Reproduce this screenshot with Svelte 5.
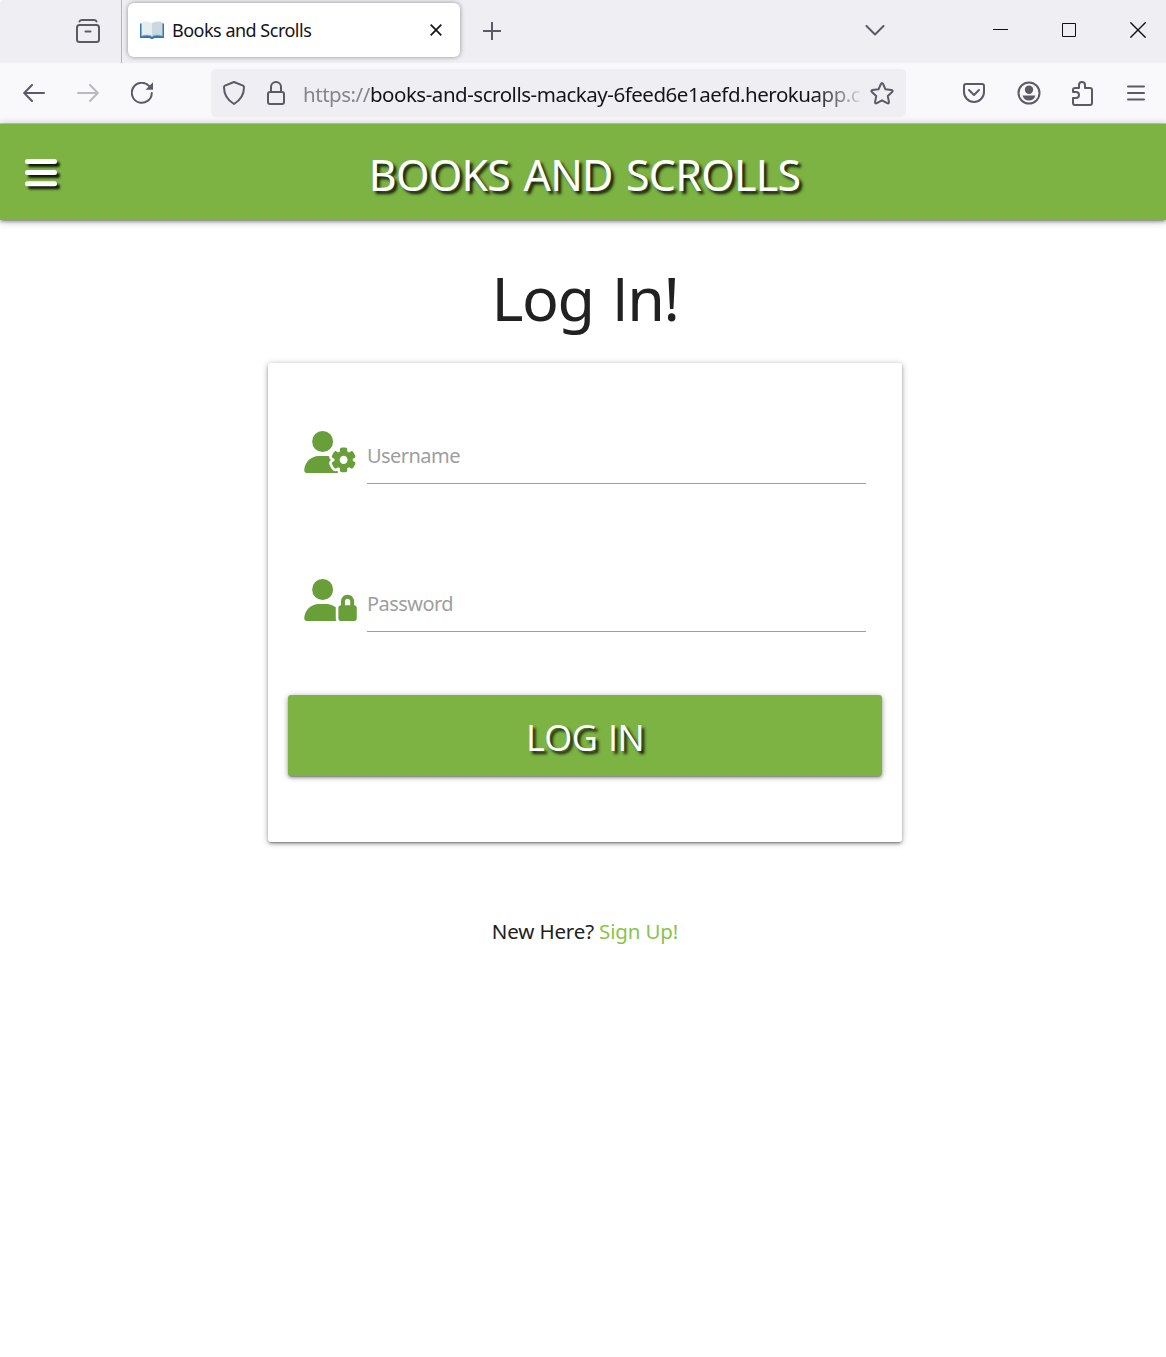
<script>
  let username = $state('');
  let password = $state('');
</script>

<div class="window">
  <div class="tabs">
    <div class="recent">
      <svg width="24" height="24" viewBox="0 0 24 24" class="line"><path d="M3.500 2.500Q4 1 6 1h12q2 0 2.500 1.500"/><rect x="1" y="6" width="22" height="17" rx="2.500"/><path d="M9.500 12.500h5"/></svg>
    </div>
    <div class="tab">
      <svg width="24" height="18" viewBox="0 0 24 18">
        <path d="M0 2.500h24v14.500h-9.500q-2.500 2-5 0H0z" fill="#2f78ad"/>
        <path d="M1.500 1Q8-.5 12 2v13.500Q8 13 1.500 15z" fill="#e6edf1"/>
        <path d="M22.500 1Q16-.5 12 2v13.500q4-2.500 10.500-.5z" fill="#cbd8df"/>
        <path d="M1.500 15Q8 13 12 15.500 16 13 22.500 15" fill="none" stroke="#9db3c1"/>
      </svg>
      <span class="tab-title">Books and Scrolls</span>
      <svg class="close" width="12" height="12" viewBox="0 0 12 12"><path d="M.7.7l10.600 10.600M11.300.7L.7 11.300"/></svg>
    </div>
    <svg class="plus" width="18" height="18" viewBox="0 0 18 18"><path d="M9 0v18M0 9h18"/></svg>
    <div class="controls">
      <svg class="line" width="20" height="11" viewBox="0 0 20 11"><path d="M1.500 1l8.500 8.500L18.500 1"/></svg>
      <svg class="thin minimize" width="15" height="15" viewBox="0 0 15 15"><path d="M0 6.500h15"/></svg>
      <svg class="thin maximize" width="14" height="14" viewBox="0 0 14 14"><path d="M.5.5h13v13H.5z"/></svg>
      <svg class="thin exit" width="16" height="16" viewBox="0 0 16 16"><path d="M.4.4l15.200 15.200M15.600.4L.4 15.600"/></svg>
    </div>
  </div>

  <div class="toolbar">
    <div class="history">
      <svg class="line" width="22" height="18" viewBox="0 0 22 18"><path d="M21 9H1.500M9 1L1.200 9 9 17"/></svg>
      <svg class="line faded" width="22" height="18" viewBox="0 0 22 18"><path d="M1 9h19.500M13 1l7.800 8L13 17"/></svg>
      <svg class="line reload" width="23" height="22" viewBox="0 0 23 22"><path d="M18.300 4.200A10 10 0 1 0 20.800 11"/><path d="M22 .3v7.500h-7.500z" fill="#5b5b66" stroke="none"/></svg>
    </div>
    <div class="address">
      <svg class="line" width="22" height="24" viewBox="0 0 22 24"><path d="M11 1L20 4.700q1 .5 1 1.500Q21 17 11 23 1 17 1 6.200q0-1 1-1.500z"/></svg>
      <svg class="line lock" width="18" height="24" viewBox="0 0 18 24"><rect x="1" y="11" width="16" height="12" rx="2"/><path d="M4 11V6a5 5 0 0 1 10 0v5"/></svg>
      <div class="url"><span>https://</span>books-and-scrolls-mackay-6feed6e1aefd.herokuapp.c</div>
      <svg class="line star" width="24" height="23" viewBox="0 0 24 23"><path d="M10.900 2q1.100-2 2.200 0l2.400 5.300 5.900.8q2.100.4.700 2l-4.300 4 1.100 5.800q.3 2.200-1.700 1.300L12 18.300l-5.200 2.900q-2 .9-1.700-1.300l1.100-5.800-4.300-4q-1.400-1.600.7-2l5.900-.8z"/></svg>
    </div>
    <div class="actions">
      <svg class="line" width="22" height="20" viewBox="0 0 22 20"><path d="M3 1h16q2 0 2 2v6a10 10 0 0 1-20 0V3q0-2 2-2z"/><path d="M6 7l5 5 5-5"/></svg>
      <svg class="line" width="24" height="24" viewBox="0 0 24 24"><circle cx="12" cy="12" r="10.500"/><g fill="#5b5b66" stroke="none"><circle cx="12" cy="8.700" r="4.200"/><path d="M5.500 14.500h13q-1.500 5-6.500 5t-6.500-5z"/></g></svg>
      <svg class="line puzzle" width="21" height="25" viewBox="0 0 21 25"><path d="M3 7h4V4a3 3 0 0 1 6 0v3h5q2 0 2 2v13q0 2-2 2H3q-2 0-2-2v-5h3a3 3 0 0 0 0-6H1V9q0-2 2-2z"/></svg>
      <svg class="line" width="18" height="16" viewBox="0 0 18 16"><path d="M1 1.500h16M1 8h16M1 14.500h16"/></svg>
    </div>
  </div>

  <header>
    <svg class="menu" width="32" height="28" viewBox="0 0 32 28"><path d="M2.500 2.500h27M2.500 13.600h27M2.500 24.700h27"/></svg>
    <div class="brand">BOOKS AND SCROLLS</div>
  </header>

  <main>
    <h1>Log <span>I</span>n!</h1>
    <form onsubmit={(e) => e.preventDefault()}>
      <label class="field">
        <svg width="53" height="42" viewBox="0 0 640 512"><path d="M224 0a128 128 0 1 1 0 256A128 128 0 1 1 224 0zM178.300 304h91.400c11.800 0 23.400 1.200 34.500 3.300c-2.100 18.500 7.400 35.600 21.800 44.800c-16.600 10.600-26.700 31.600-20 53.300c4 12.900 9.400 25.500 16.400 37.600s15.200 23.100 24.400 33c15.700 16.900 39.600 18.400 57.200 8.700v.9c0 9.200 2.700 18.500 7.900 26.300H29.700C13.300 512 0 498.700 0 482.300C0 383.800 79.800 304 178.300 304zM436 218.200c0-7 4.500-13.300 11.300-14.800c10.500-2.400 21.500-3.700 32.700-3.700s22.200 1.300 32.700 3.700c6.800 1.500 11.300 7.800 11.300 14.800v30.600c7.900 3.400 15.400 7.700 22.300 12.800l24.900-14.300c6.100-3.500 13.700-2.700 18.500 2.400c7.600 8.100 14.300 17.200 20.100 27.200s10.300 20.400 13.500 31c2.100 6.700-1.100 13.700-7.200 17.200l-25 14.400c.4 4 .7 8.100 .7 12.300s-.2 8.200-.7 12.300l25 14.400c6.100 3.500 9.200 10.500 7.200 17.200c-3.300 10.600-7.800 21-13.500 31s-12.500 19.100-20.100 27.200c-4.800 5.100-12.500 5.900-18.500 2.400l-24.900-14.300c-6.900 5.100-14.300 9.400-22.300 12.800l0 30.600c0 7-4.500 13.300-11.300 14.800c-10.500 2.400-21.500 3.700-32.700 3.700s-22.200-1.300-32.700-3.700c-6.800-1.500-11.300-7.800-11.300-14.800V454.800c-8-3.400-15.600-7.700-22.500-12.900l-24.700 14.300c-6.100 3.500-13.700 2.700-18.500-2.400c-7.600-8.100-14.300-17.200-20.100-27.200s-10.300-20.400-13.500-31c-2.100-6.700 1.100-13.700 7.200-17.200l24.800-14.300c-.4-4.100-.7-8.200-.7-12.400s.2-8.300 .7-12.400L343.800 325c-6.100-3.500-9.200-10.500-7.200-17.200c3.300-10.600 7.700-21 13.500-31s12.500-19.100 20.100-27.200c4.800-5.100 12.400-5.900 18.500-2.400l24.800 14.300c6.900-5.100 14.500-9.400 22.500-12.900V218.200zm92.100 133.500a48.100 48.100 0 1 0 -96.100 0 48.100 48.100 0 1 0 96.100 0z"/></svg>
        <input type="text" placeholder="Username" bind:value={username} />
      </label>
      <label class="field">
        <svg width="53" height="42" viewBox="0 0 640 512"><path d="M224 256A128 128 0 1 0 224 0a128 128 0 1 0 0 256zm-45.700 48C79.800 304 0 383.800 0 482.300C0 498.700 13.300 512 29.700 512H392.600c-5.400-9.400-8.600-20.300-8.600-32V352c0-2.100 .1-4.200 .3-6.300c-31-26-71-41.700-114.600-41.700H178.300zM528 240c17.700 0 32 14.300 32 32v48H496V272c0-17.700 14.300-32 32-32zm-80 32v48c-17.700 0-32 14.300-32 32V480c0 17.700 14.300 32 32 32H608c17.700 0 32-14.300 32-32V352c0-17.700-14.300-32-32-32V272c0-44.200-35.800-80-80-80s-80 35.800-80 80z"/></svg>
        <input type="password" placeholder="Password" bind:value={password} />
      </label>
      <button type="submit">LOG IN</button>
    </form>
    <p>New Here? <a href="#signup">Sign Up!</a></p>
  </main>
</div>

<style>
  :global(body) { margin: 0; background: #fff; }
  .window { min-height: 1357px; overflow: hidden; background: #fff; font-family: "Noto Sans", "Open Sans", sans-serif; color: #212121; }
  svg { display: block; flex: none; }
  .line { fill: none; stroke: #5b5b66; stroke-width: 2; stroke-linecap: round; stroke-linejoin: round; }
  .faded { opacity: .4; }
  .tabs { height: 63px; box-sizing: border-box; display: flex; align-items: center; background: #efeef3; border-top-left-radius: 4px; }
  .recent { width: 45px; height: 44px; padding: 19px 0 0 76px; border-right: 1px solid #b5b4bb; }
  .tab { width: 332px; height: 54px; margin: -3px 0 0 6px; box-sizing: border-box; padding: 0 18px 0 12px; display: flex; align-items: center; background: #fff; border-radius: 6px; box-shadow: 0 0 5px rgba(0, 0, 0, .4); }
  .tab-title { margin-left: 8px; flex: 1; font-size: 18px; line-height: 24px; letter-spacing: -.5px; color: #15141a; white-space: nowrap; }
  .close { fill: none; stroke: #15141a; stroke-width: 1.700; }
  .plus { margin: -1px 0 0 23px; fill: none; stroke: #5b5b66; stroke-width: 2; }
  .controls { margin-left: auto; padding-right: 20px; display: flex; align-items: center; margin-top: -3px; }
  .thin { fill: none; stroke: #111; stroke-width: 1; }
  .minimize { margin-left: 108px; }
  .maximize { margin-left: 54px; }
  .exit { margin-left: 54px; stroke-width: 1.400; }
  .toolbar { height: 61px; box-sizing: border-box; display: flex; align-items: center; background: #f9f9fb; border-bottom: 1px solid #ccccd1; }
  .history { width: 188px; padding-left: 23px; display: flex; align-items: center; gap: 32px; }
  .reload { margin-top: -1px; }
  .address { width: 695px; height: 48px; box-sizing: border-box; padding: 0 12px; display: flex; align-items: center; border-radius: 5px; background: #efeef3; }
  .lock { margin-left: 22px; }
  .url { width: 557px; margin: 1px 0 0 18px; overflow: hidden; white-space: nowrap; font-size: 20.500px; line-height: 30px; letter-spacing: -.47px; color: #15141a; mask-image: linear-gradient(to right, #000 512px, transparent 562px); }
  .url span { color: #86858d; }
  .star { margin-left: 10px; }
  .actions { margin-left: 57px; display: flex; align-items: center; gap: 32px; }
  .puzzle { margin: 0 2px 0 -1px; }
  header { height: 96px; position: relative; display: flex; align-items: center; justify-content: center; background: #7cb342; box-shadow: 0 2px 3px rgba(0, 0, 0, .22), 0 3px 1px -2px rgba(0, 0, 0, .12), 0 1px 8px rgba(0, 0, 0, .3); }
  .menu { position: absolute; left: 24.500px; top: 35px; overflow: visible; fill: none; stroke: #fff; stroke-width: 5; stroke-linecap: round; filter: drop-shadow(3px 3px 1px rgba(0, 0, 0, .85)); }
  .brand { padding: 5px 0 0 3px; font-size: 43px; line-height: 60px; letter-spacing: -.8px; word-spacing: 3px; color: #fff; text-shadow: 3px 3px 3px rgba(0, 0, 0, .85); white-space: nowrap; }
  main { width: 634px; margin-left: 268px; }
  h1 { margin: 37px 0 24px; height: 82px; font-size: 61px; line-height: 82px; font-weight: 400; letter-spacing: -1.500px; word-spacing: 4px; text-align: center; }
  h1 span { font-family: "Open Sans", sans-serif; line-height: 1; }
  form { height: 479px; box-sizing: border-box; padding: 60px 20px 0; border-radius: 3px; background: #fff; box-shadow: 0 2px 3px rgba(0, 0, 0, .22), 0 3px 1px -2px rgba(0, 0, 0, .18), 0 1px 6px rgba(0, 0, 0, .3); }
  .field { height: 61px; margin-bottom: 87px; padding: 0 16px; display: flex; align-items: flex-start; }
  .field svg { margin: 8px 10px 0 0; fill: #689f38; }
  input { flex: 1; min-width: 0; height: 61px; box-sizing: border-box; padding: 5px 0 0; border: 0; border-bottom: 1px solid #9e9e9e; outline: 0; background: transparent; font: 20px "Noto Sans", "Open Sans", sans-serif; letter-spacing: -.550px; color: #212121; }
  input::placeholder { color: #9e9e9e; opacity: 1; }
  button { width: 594px; height: 81px; margin-top: -24px; padding: 3px 0 0; display: block; border: 0; border-radius: 3px; background: #7cb342; color: #fff; font: 36px "Open Sans", "Noto Sans", sans-serif; letter-spacing: -.6px; word-spacing: 2px; text-shadow: 3px 3px 3px rgba(0, 0, 0, .85); box-shadow: 0 2px 3px rgba(0, 0, 0, .22), 0 3px 1px -2px rgba(0, 0, 0, .18), 0 1px 6px rgba(0, 0, 0, .3); }
  p { margin: 74px 0 0; font-size: 20.500px; line-height: 30px; letter-spacing: -.150px; text-align: center; }
  a { color: #8bc34a; text-decoration: none; }
</style>
